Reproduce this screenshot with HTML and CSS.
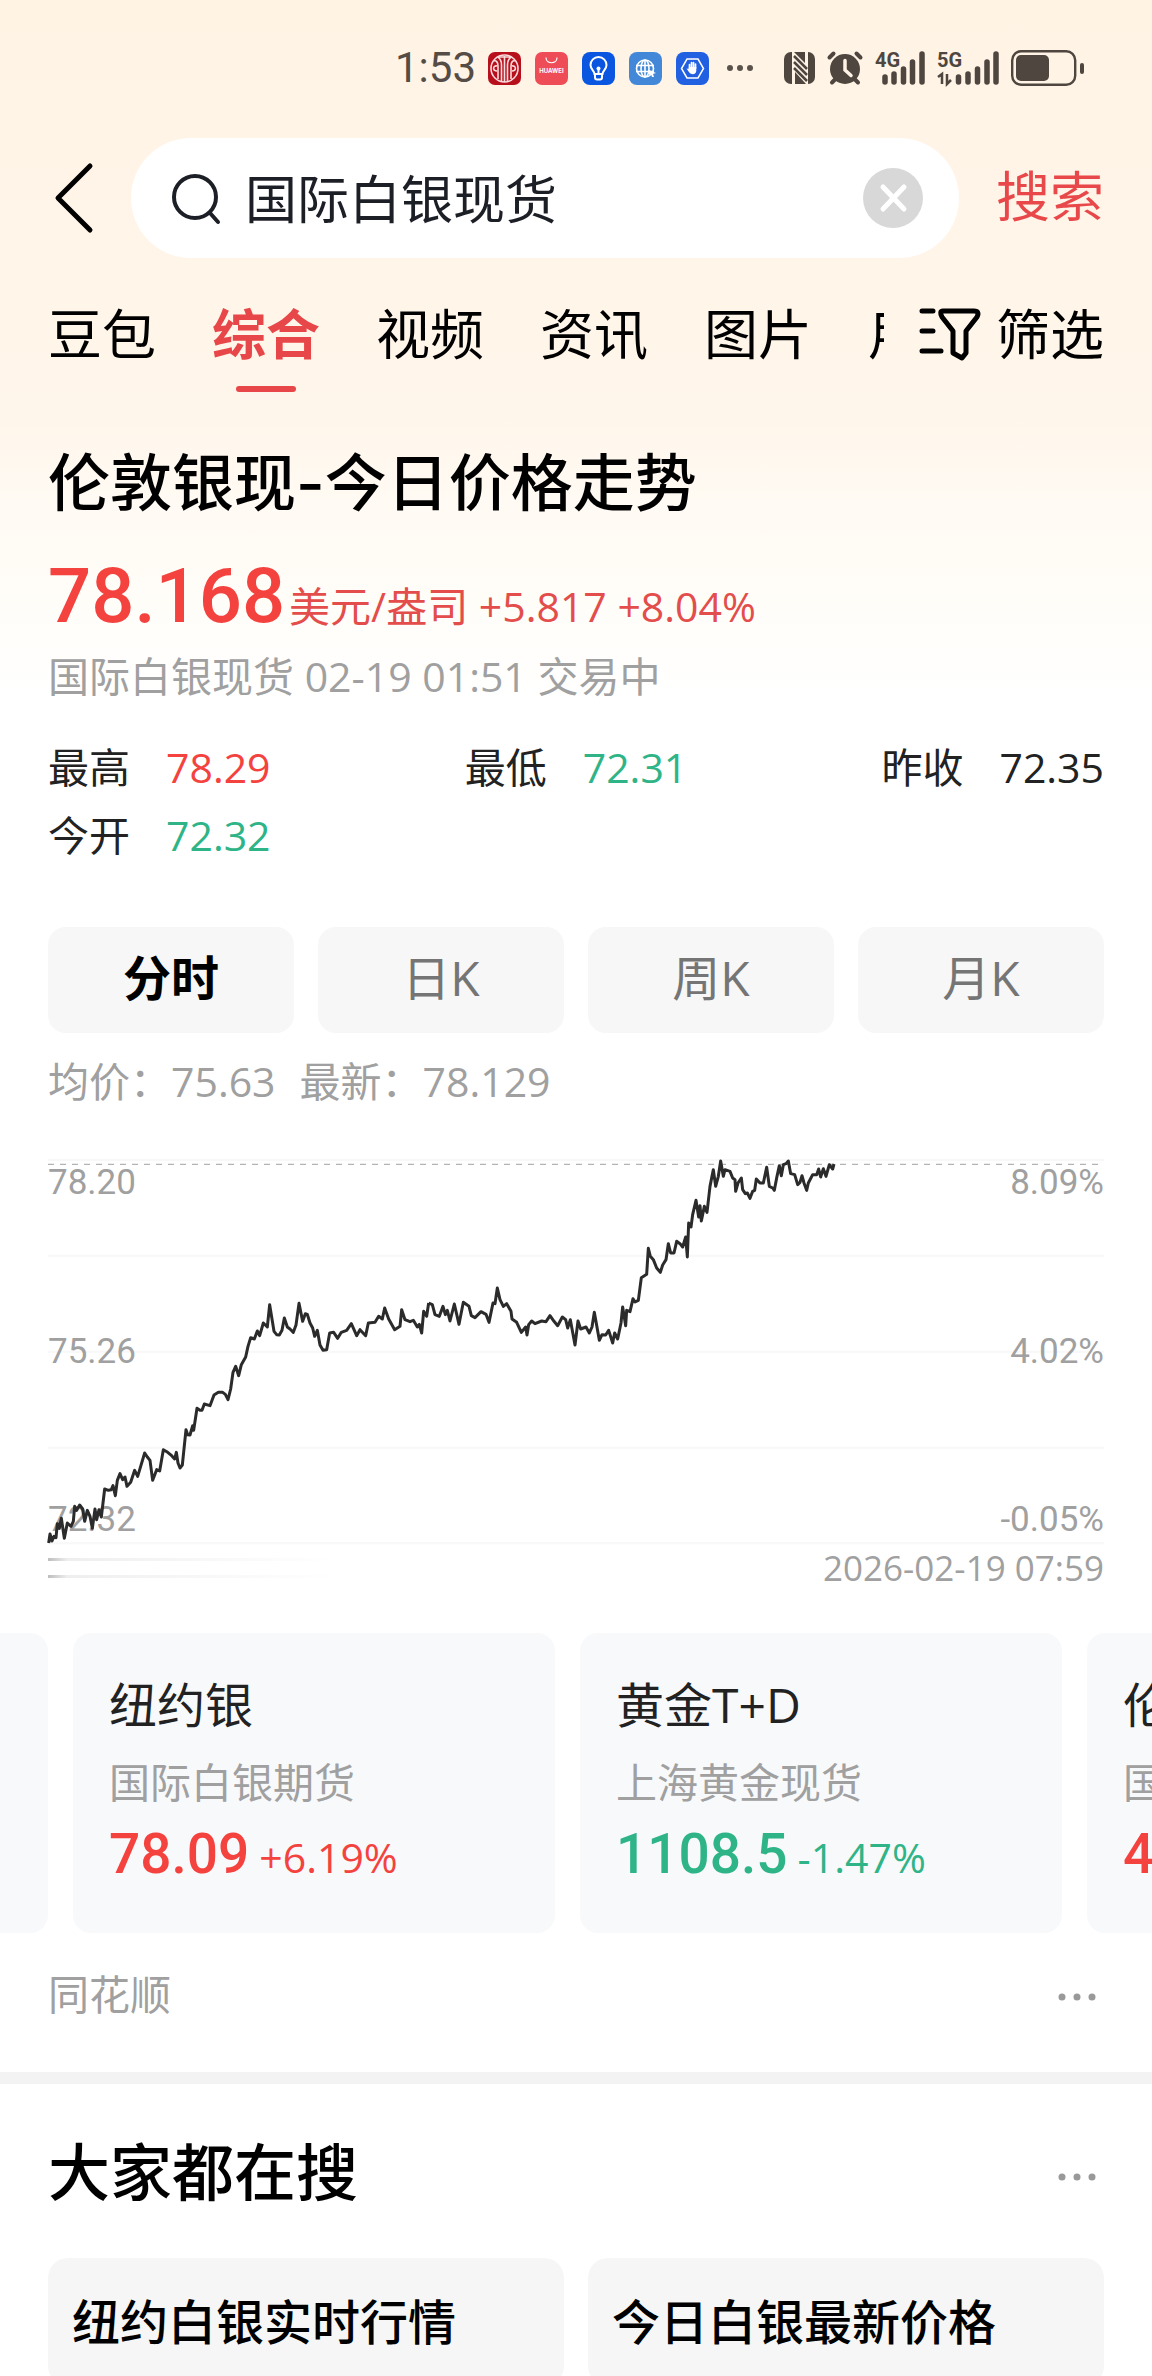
FILE: index.html
```html
<!DOCTYPE html>
<html lang="zh-CN">
<head>
<meta charset="utf-8">
<meta name="viewport" content="width=device-width, initial-scale=1">
<title>国际白银现货</title>
<link rel="stylesheet" href="styles.css">
</head>
<body>
<div class="page">
  <div class="status">
    <span class="status-time">1:53</span>
    <div class="status-apps">
      <svg width="33" height="33" viewBox="0 0 33 33"><rect width="33" height="33" rx="7" fill="#b80f1c"/><g fill="none" stroke="#f6dcdc" stroke-width="1.6"><circle cx="16.500" cy="16.500" r="13.500"/><path d="M10 27V14c0-4-2-6-4-5M13.500 29V13c0-4-2-7-4-8M16.500 30V4M19.500 29V13c0-4 2-7 4-8M23 27V14c0-4 2-6 4-5M9 14c-4-1-5 5 0 5M24 14c4-1 5 5 0 5M11 5h11"/></g></svg>
      <svg width="33" height="33" viewBox="0 0 33 33"><rect width="33" height="33" rx="7" fill="#ee4d57"/><path d="M11 5.500c0 7 11 7 11 0" fill="none" stroke="#fff" stroke-width="1.200"/><text x="16.500" y="21" text-anchor="middle" class="app-word">HUAWEI</text></svg>
      <svg width="33" height="33" viewBox="0 0 33 33"><rect width="33" height="33" rx="8" fill="#0b56e0"/><g fill="none" stroke="#fff" stroke-width="2"><path d="M12.500 22c0-3-4-4.500-4-9a8 8 0 0 1 16 0c0 4.500-4 6-4 9zM13 22v3.500q0 2 2 2h3q2 0 2-2V22M16.500 22v-5"/></g><circle cx="16.500" cy="16.500" r="2" fill="#fff"/></svg>
      <svg width="33" height="33" viewBox="0 0 33 33"><rect width="33" height="33" rx="8" fill="#4388d8"/><g fill="none" stroke="#fff" stroke-width="1.600"><circle cx="16" cy="16.500" r="8.500"/><ellipse cx="16" cy="16.500" rx="4" ry="8.500"/><path d="M16 8v17M7 13.500h18M7 19.500h18"/></g><path d="m20 18 7 3-3 1 1 3-2 0-1-3-2 1z" fill="#fff"/></svg>
      <svg width="33" height="33" viewBox="0 0 33 33"><rect width="33" height="33" rx="8" fill="#2260e2"/><path d="M11 7h11l5.500 9.500L22 26H11l-5.500-9.500z" fill="none" stroke="#fff" stroke-width="1.500"/><path d="M13.500 17v-4.500M15.500 16v-5.500M17.500 16v-5.500M19.500 16v-4" stroke="#fff" stroke-width="1.700" stroke-linecap="round"/><path d="M10.500 16.500l2 .5 .5-2h7.300v3.500c0 4.500-5 4.500-7 2z" fill="#fff"/></svg>
    </div>
    <svg class="status-more" width="26" height="6" viewBox="0 0 26 6" fill="#5b534b"><circle cx="3" cy="3" r="3"/><circle cx="13" cy="3" r="3"/><circle cx="23" cy="3" r="3"/></svg>
    <div class="status-system">
      <svg width="31" height="32" viewBox="0 0 31 32"><rect width="31" height="32" rx="7" fill="#4e463f"/><path d="M8 32V0h2l11 11V0h3v32h-2L11 20v12z" fill="#fff3e5"/><path d="M10 4l13 13M10 10l13 13M10 16l13 13" fill="none" stroke="#4e463f" stroke-width="2.500"/></svg>
      <svg width="36" height="34" viewBox="0 0 36 34"><g stroke="#4e463f" stroke-width="4" stroke-linecap="round"><path d="M2.500 6.500 6.500 2.500M33.500 6.500 29.500 2.500M5 31.500l5-5M31 31.500l-5-5"/></g><circle cx="18" cy="18" r="15" fill="#4e463f"/><path d="M18 9.500V19l6 5.500" fill="none" stroke="#fff3e5" stroke-width="3.500" stroke-linecap="round"/></svg>
      <svg width="50" height="34" viewBox="0 0 50 34"><text x="0" y="16" class="net">4G</text><g stroke="#4e463f" stroke-width="5.500" stroke-linecap="round"><path d="M10 26v5M19 23v8M28.500 18v13M37.500 11v20M47 3v28"/></g></svg>
      <svg width="62" height="34" viewBox="0 0 62 34"><text x="0" y="16" class="net">5G</text><g stroke="#4e463f" stroke-width="5.500" stroke-linecap="round"><path d="M21.500 26v5M31 23v8M40.500 18v13M50 11v20M59 3v28"/></g><path d="M1 26l4-3v10M10 23v10l4-4" fill="none" stroke="#4e463f" stroke-width="2.500"/></svg>
      <svg width="73" height="36" viewBox="0 0 73 36"><rect x="1.200" y="1.200" width="63" height="33.600" rx="9" fill="none" stroke="#4e463f" stroke-width="2.400"/><rect x="5" y="5" width="33" height="26" rx="5" fill="#4e463f"/><path d="M71 15v7" stroke="#4e463f" stroke-width="4" stroke-linecap="round"/></svg>
    </div>
  </div>

  <form class="search" role="search">
    <button class="back" type="button" aria-label="返回"><svg width="48" height="72" viewBox="0 0 48 72"><path d="M42 4 10 36l32 32" fill="none" stroke="#000" stroke-width="5" stroke-linecap="round" stroke-linejoin="round"/></svg></button>
    <div class="search-box">
      <svg width="52" height="52" viewBox="0 0 52 52" fill="none" stroke="#1c1f26" stroke-width="4" stroke-linecap="round"><circle cx="24" cy="25" r="21"/><path d="m39 41 8 9"/></svg>
      <input class="search-input" type="text" value="国际白银现货" aria-label="搜索内容">
      <button class="clear" type="button" aria-label="清除"><svg width="60" height="60" viewBox="0 0 60 60"><circle cx="30" cy="30" r="30" fill="#d8d8d8"/><path d="m20 19 21 22M41 19 20 41" stroke="#fff" stroke-width="5" stroke-linecap="round"/></svg></button>
    </div>
    <button class="search-go" type="submit">搜索</button>
  </form>

  <nav class="nav">
    <div class="tabs">
      <a class="tab" href="#">豆包</a>
      <a class="tab tab-on" href="#" aria-current="page">综合</a>
      <a class="tab" href="#">视频</a>
      <a class="tab" href="#">资讯</a>
      <a class="tab" href="#">图片</a>
      <a class="tab" href="#">用户</a>
    </div>
    <button class="filter" type="button">
      <svg width="62" height="54" viewBox="0 0 62 54" fill="none" stroke="#000" stroke-width="5" stroke-linecap="round" stroke-linejoin="round"><path d="M3 4h11M3 24h11M3 44h19M24 4h31q6 0 3 6L47 24v22l-4 5-9-5V24L23 10q-3-6 1-6z"/></svg>
      <span>筛选</span>
    </button>
  </nav>

  <main>
    <section class="quote">
      <h1 class="title">伦敦银现-今日价格走势</h1>
      <p class="price-row"><strong class="price">78.168</strong><span class="unit">美元/盎司 +5.817 +8.04%</span></p>
      <p class="meta">国际白银现货 02-19 01:51 交易中</p>
      <dl class="stats">
        <div class="stat"><dt>最高</dt><dd class="up">78.29</dd></div>
        <div class="stat"><dt>最低</dt><dd class="down">72.31</dd></div>
        <div class="stat"><dt>昨收</dt><dd>72.35</dd></div>
        <div class="stat"><dt>今开</dt><dd class="down">72.32</dd></div>
      </dl>
      <div class="periods">
        <button class="period period-on" type="button">分时</button>
        <button class="period" type="button">日K</button>
        <button class="period" type="button">周K</button>
        <button class="period" type="button">月K</button>
      </div>
      <p class="legend"><span>均价：75.63</span><span>最新：78.129</span></p>
      <div class="chart">
        <svg class="plot" viewBox="144 118 3168 1155" aria-hidden="true">
          <path d="M144 121H3312M144 408H3312M144 696H3312M144 984H3312M144 1271H3312" stroke="#f8f8f8" stroke-width="6"/>
          <path d="M144 134H3312" stroke="#b4b4b4" stroke-width="4" stroke-dasharray="18 18"/>
        </svg>
        <div class="axis"><span>78.20</span><span>75.26</span><span>72.32</span></div>
        <div class="axis axis-right"><span>8.09%</span><span>4.02%</span><span>-0.05%</span></div>
        <svg class="plot" viewBox="144 118 3168 1155" role="img" aria-label="分时走势">
          <g fill="none" stroke="#2b2b2b" stroke-width="9" stroke-linejoin="round">
            <polyline points="146,1270 150,1243 156,1264 162,1250 168,1254 172,1212 178,1226 184,1196 193,1256 202,1210 213,1220 220,1205 224,1160 230,1172 239,1156 248,1168 254,1205 262,1172 270,1190 277,1226 285,1168 290,1200 297,1170 304,1192 314,1108 325,1112 334,1110 339,1098 346,1128 352,1082 360,1062 368,1080 375,1072 381,1100 392,1088 404,1052 413,1070 422,1040 434,1000 442,1012 450,1022 458,1082 470,1050 479,1054 490,990 503,998 515,1008 524,1018 529,998 534,1030 540,1045 547,1036 558,930 563,945 570,946 578,918 581,932 591,866 600,872 606,872 613,853 630,858 642,826 655,818 668,818 676,824 684,840 692,808 699,758 707,740 716,768 724,735 737,712 744,680 752,654 763,658 772,634 779,648 790,610 802,622 809,555 822,635 830,645 838,646 846,632 853,595 862,622 870,628 880,638 888,616 897,551 908,605 916,582 922,584 930,610 938,625 944,650 952,632 960,676 969,692 980,690 989,640 1001,638 1013,656 1024,638 1040,632 1054,612 1070,648 1080,630 1097,648 1105,610 1125,608 1136,590 1147,598 1154,565 1166,598 1184,630 1200,620 1205,570 1215,600 1230,606 1240,602 1252,622 1258,614 1265,640 1271,575 1280,590 1286,550"/>
            <polyline transform="translate(1200 0)" points="86,550 97,555 105,585 118,590 129,560 136,585 142,572 150,604 163,553 177,614 190,548 207,560 214,588 225,594 243,576 258,584 267,608 279,550 285,552 292,505 300,540 310,560 320,552 333,575 336,598 350,608 364,638 377,622 381,646 386,615 395,604 405,612 425,604 438,606 450,588 462,605 473,618 487,592 497,600 503,625 511,600 525,676 534,604 542,628 558,622 568,640 576,622 583,578 598,662 606,645 617,646 626,632 638,670 644,640 653,658 663,610 668,562 677,618 680,572 690,576 699,537 705,547 715,542 724,474 740,464 745,386 751,410 760,420 770,445 781,458 788,436 798,420 805,372 812,400 822,400 830,365 840,372 848,382 857,352 862,412 866,310 873,322 878,285 888,242 896,292 900,258 904,304 913,260 921,278 930,200 940,150 947,200 955,170 962,124 970,170 975,150 990,155 998,175 1005,180 1007,215 1014,190 1024,175 1028,210 1036,222 1042,220 1050,236 1058,215 1064,212 1069,178 1080,190 1090,190 1100,143 1108,200 1118,205 1123,212 1131,170 1138,138 1144,168 1150,135 1158,132 1165,124 1172,162 1184,165 1193,195 1200,188 1206,168 1212,190 1220,212 1225,190 1238,165 1250,165 1256,148 1262,172 1270,147 1278,170 1288,135 1298,148 1302,133"/>
          </g>
        </svg>
      </div>
      <div class="chart-foot"><div class="fade"></div><time datetime="2026-02-19T07:59">2026-02-19 07:59</time></div>
    </section>

    <div class="cards">
      <div class="card card-peek"></div>
      <a class="card" href="#"><span class="card-name">纽约银</span><span class="card-kind">国际白银期货</span><span class="card-value up"><strong>78.09</strong><span>+6.19%</span></span></a>
      <a class="card" href="#"><span class="card-name">黄金T+D</span><span class="card-kind">上海黄金现货</span><span class="card-value down"><strong>1108.5</strong><span>-1.47%</span></span></a>
      <a class="card" href="#"><span class="card-name">伦敦金</span><span class="card-kind">国际黄金现货</span><span class="card-value up"><strong>4</strong></span></a>
    </div>

    <div class="source">
      <span>同花顺</span>
      <button class="more" type="button" aria-label="更多"><svg width="38" height="8" viewBox="0 0 38 8" fill="#999"><circle cx="4" cy="4" r="3.500"/><circle cx="19" cy="4" r="3.500"/><circle cx="34" cy="4" r="3.500"/></svg></button>
    </div>

    <section class="trending">
      <div class="trending-head">
        <h2 class="title">大家都在搜</h2>
        <button class="more" type="button" aria-label="更多"><svg width="38" height="8" viewBox="0 0 38 8" fill="#999"><circle cx="4" cy="4" r="3.500"/><circle cx="19" cy="4" r="3.500"/><circle cx="34" cy="4" r="3.500"/></svg></button>
      </div>
      <div class="topics">
        <a class="topic" href="#">纽约白银实时行情</a>
        <a class="topic" href="#">今日白银最新价格</a>
      </div>
    </section>
  </main>
</div>
</body>
</html>
```
FILE: styles.css
```css
* {
  box-sizing: border-box;
  margin: 0;
  padding: 0;
}

body {
  background: #fff;
  color: #222;
  font-family: "Open Sans", "Noto Sans CJK SC", sans-serif;
  font-size: 41px;
  line-height: 56px;
}

button,
input {
  border: 0;
  background: none;
  color: inherit;
  font: inherit;
}

a {
  color: inherit;
  text-decoration: none;
}

svg {
  display: block;
  flex: none;
  overflow: visible;
}

.page {
  height: 100vh;
  overflow: hidden;
  background: linear-gradient(#fff3e4 0, #fff6eb 420px, #fffaf3 500px, #fffdf8 600px, #fff 700px);
}

.up { color: #f4433f; }
.down { color: #2fb487; }

/* Status bar */
.status {
  display: flex;
  justify-content: flex-end;
  align-items: center;
  padding: 45px 68px 47px 48px;
  line-height: 46px;
}

.status-time {
  color: #544c45;
  font-family: Roboto, sans-serif;
  font-size: 42px;
  margin-right: 12px;
}

.status-apps {
  display: flex;
  gap: 14px;
}

.status-more { margin: 0 31px 0 18px; }

.status-system {
  display: flex;
  align-items: center;
  gap: 12px;
}

.app-word {
  fill: #fff;
  font: bold 6px Inter, sans-serif;
}

.net {
  fill: #4e463f;
  font: bold 20px Roboto, sans-serif;
}

/* Search bar */
.search {
  display: flex;
  align-items: center;
  padding: 0 48px;
}

.back {
  width: 83px;
  flex: none;
}

.search-box {
  display: flex;
  align-items: center;
  flex: 1;
  min-width: 0;
  height: 120px;
  padding: 0 36px 0 40px;
  border-radius: 60px;
  background: #fff;
}

.search-input {
  flex: 1;
  min-width: 0;
  height: 80px;
  margin: 0 22px;
  padding-bottom: 4px;
  color: #1c1f26;
  font-size: 52px;
  outline: 0;
}

.search-go {
  margin-left: 37px;
  padding-bottom: 4px;
  color: #e8484a;
  font-size: 54px;
  line-height: 80px;
}

/* Tabs */
.nav {
  display: flex;
  gap: 35px;
  padding: 36px 48px 0;
  color: #000;
  font-size: 54px;
  line-height: 80px;
}

.tabs {
  display: flex;
  gap: 56px;
  flex: 1;
  min-width: 0;
  overflow: hidden;
}

.tab {
  flex: none;
  height: 98px;
}

.tab-on {
  color: #e8474a;
  font-weight: 700;
}

.tab-on::after {
  content: "";
  display: block;
  width: 60px;
  height: 6px;
  margin: 12px auto 0;
  border-radius: 3px;
  background: #e8474a;
}

.filter {
  display: flex;
  align-items: center;
  gap: 15px;
  height: 80px;
}

/* Quote */
.quote { padding: 52px 48px 0; }

.title {
  color: #000;
  font-family: Inter, "Noto Sans CJK SC", sans-serif;
  font-size: 62px;
  font-weight: 500;
  line-height: 80px;
}

.price-row {
  display: flex;
  align-items: baseline;
  gap: 4px;
  margin-top: 22px;
  height: 102px;
  color: #f4433f;
}

.price {
  font-family: Roboto, sans-serif;
  font-size: 76px;
  font-weight: 500;
  line-height: 100px;
}

.unit { color: #e34d4b; }

.meta { color: #a0a0a0; }

.stats {
  display: grid;
  grid-template-columns: repeat(3, auto);
  justify-content: space-between;
  margin-top: 29px;
  line-height: 68px;
}

.stat {
  display: flex;
  gap: 36px;
}

.periods {
  display: grid;
  grid-template-columns: repeat(4, 1fr);
  gap: 24px;
  margin-top: 58px;
}

.period {
  height: 106px;
  padding-bottom: 4px;
  border-radius: 18px;
  background: #f7f7f7;
  color: #757575;
  font-size: 48px;
}

.period-on {
  color: #000;
  font-weight: 600;
}

.legend {
  display: flex;
  gap: 24px;
  margin-top: 20px;
  color: #a0a0a0;
}

.chart {
  display: grid;
  margin-top: 50px;
}

.axis,
.plot {
  grid-area: 1 / 1;
}

.plot {
  width: 100%;
  height: auto;
}

.axis {
  display: flex;
  flex-direction: column;
  justify-content: space-between;
  padding: 4px 0;
  color: #a0a0a0;
  font-family: Roboto, sans-serif;
  font-size: 35px;
  line-height: 40px;
}

.axis-right { text-align: right; }

.chart-foot {
  display: flex;
  justify-content: space-between;
  align-items: center;
  color: #a0a0a0;
  font-size: 35px;
  line-height: 48px;
}

.fade {
  width: 288px;
  height: 20px;
  border: solid;
  border-width: 3px 0;
  border-image: linear-gradient(90deg, #bbb, #eee 20px, #f7f7f7 50%, #fff) 1;
}

/* Related instruments */
.cards {
  display: flex;
  gap: 25px;
  margin-top: 41px;
  overflow: hidden;
}

.card {
  display: flex;
  flex-direction: column;
  flex: none;
  width: 482px;
  height: 300px;
  padding: 38px 36px;
  border-radius: 18px;
  background: #f8f9fb;
}

.card-peek {
  width: 48px;
  padding: 0;
  border-radius: 0 18px 18px 0;
}

.card-name {
  font-size: 48px;
  line-height: 68px;
}

.card-kind {
  margin-top: 13px;
  color: #a0a0a0;
  line-height: 60px;
}

.card-value {
  display: flex;
  align-items: baseline;
  gap: 10px;
  line-height: 84px;
}

.card-value strong {
  font-family: Roboto, sans-serif;
  font-size: 55px;
  font-weight: 500;
}

.source {
  display: flex;
  justify-content: space-between;
  align-items: center;
  padding: 33px 48px 50px;
  color: #a0a0a0;
}

.more { padding: 12px 8px 7px; }

/* Trending searches */
.trending {
  padding: 50px 48px 0;
  border-top: 12px solid #f3f3f3;
}

.trending-head {
  display: flex;
  justify-content: space-between;
  align-items: center;
}

.topics {
  display: grid;
  grid-template-columns: 1fr 1fr;
  gap: 24px;
  margin-top: 44px;
}

.topic {
  padding: 28px 24px;
  border-radius: 20px;
  background: #f6f6f6;
  color: #000;
  font-size: 48px;
  font-weight: 500;
  line-height: 72px;
}
```
